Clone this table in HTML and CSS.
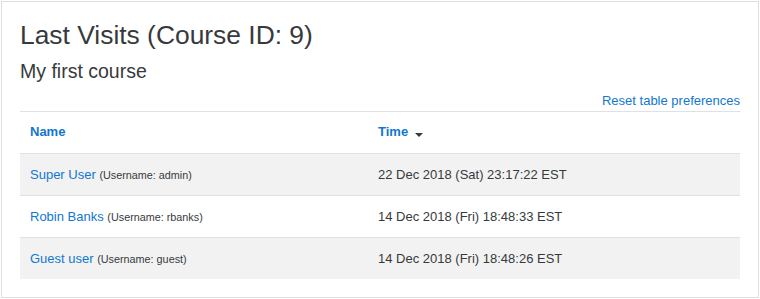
FILE: index.html
```html
<!DOCTYPE html>
<html lang="en">
<head>
<meta charset="utf-8">
<title>Last Visits</title>
<link rel="stylesheet" href="styles.css">
</head>
<body>
<div class="card">
  <h2 class="title">Last Visits (Course ID: 9)</h2>
  <h3 class="subtitle">My first course</h3>
  <div class="reset"><a href="#">Reset table preferences</a></div>
  <table class="visits">
    <colgroup><col class="col-name"><col class="col-time"></colgroup>
    <thead>
      <tr>
        <th><a href="#">Name</a></th>
        <th><a href="#">Time</a><span class="caret"></span></th>
      </tr>
    </thead>
    <tbody>
      <tr class="odd">
        <td><a href="#">Super User</a> <span class="uname">(Username: admin)</span></td>
        <td>22 Dec 2018 (Sat) 23:17:22 EST</td>
      </tr>
      <tr>
        <td><a href="#">Robin Banks</a> <span class="uname">(Username: rbanks)</span></td>
        <td>14 Dec 2018 (Fri) 18:48:33 EST</td>
      </tr>
      <tr class="odd">
        <td><a href="#">Guest user</a> <span class="uname">(Username: guest)</span></td>
        <td>14 Dec 2018 (Fri) 18:48:26 EST</td>
      </tr>
    </tbody>
  </table>
</div>
</body>
</html>
```

FILE: styles.css
```css
html, body {
  background: #ffffff;
}
body {
  margin: 1px;
  font-family: "Liberation Sans", Arial, sans-serif;
  font-size: 13px;
  color: #373a3c;
}
a {
  color: #1177d1;
  text-decoration: none;
}
.card {
  border: 1px solid #dfdfdf;
  padding: 18px;
  height: 297px;
  box-sizing: border-box;
}
.title {
  margin: 0 0 8.5px;
  font-size: 26.4px;
  line-height: 1.2;
  font-weight: normal;
  color: #373a3c;
}
.subtitle {
  margin: 0 0 7.5px;
  font-size: 19.5px;
  line-height: 1.2;
  font-weight: normal;
  color: #373a3c;
}
.reset {
  text-align: right;
  line-height: 19.5px;
}
.visits {
  width: 100%;
  border-collapse: collapse;
  table-layout: fixed;
  border-top: 1px solid #dee2e6;
}
.col-name {
  width: 348px;
}
.visits th {
  text-align: left;
  font-weight: bold;
  padding: 10.5px 10px 10.5px;
  line-height: 20px;
}
.visits td {
  padding: 11px 10px 10px;
  line-height: 20px;
  border-top: 1px solid #dee2e6;
}
.visits tr.odd td {
  background: #f2f2f2;
}
.caret {
  display: inline-block;
  width: 0;
  height: 0;
  margin-left: 7px;
  border-left: 4px solid transparent;
  border-right: 4px solid transparent;
  border-top: 4px solid #373a3c;
  vertical-align: -1px;
}
.uname {
  font-size: 10.8px;
  color: #373a3c;
}
```
